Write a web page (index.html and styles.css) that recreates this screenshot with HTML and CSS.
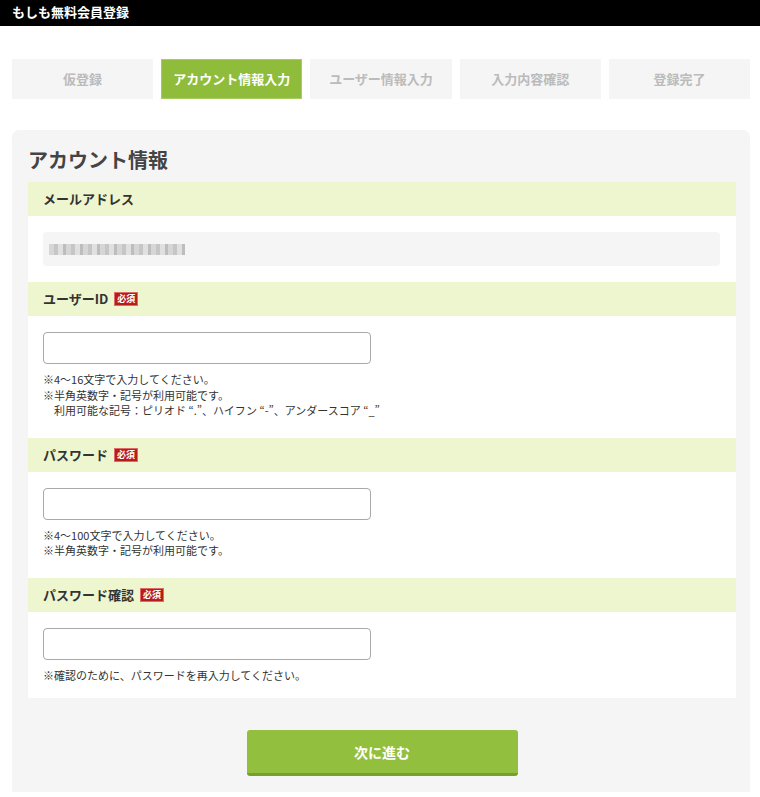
FILE: index.html
```html
<!DOCTYPE html>
<html lang="ja">
<head>
  <meta charset="UTF-8" />
  <meta name="viewport" content="width=device-width, initial-scale=1.0" />
  <title>もしも無料会員登録</title>
  <link rel="stylesheet" href="styles.css">
</head>
<body>
  <header class="site-header">もしも無料会員登録</header>

  <ol class="steps">
    <li class="step">仮登録</li>
    <li class="step active">アカウント情報入力</li>
    <li class="step">ユーザー情報入力</li>
    <li class="step">入力内容確認</li>
    <li class="step">登録完了</li>
  </ol>

  <main class="panel">
    <h1 class="panel-title">アカウント情報</h1>
    <div class="form-box">
      <div class="field-label">メールアドレス</div>
      <div class="field-body plain">
        <div class="readonly"><span class="blur"></span></div>
      </div>

      <div class="field-label">ユーザーID <span class="req">必須</span></div>
      <div class="field-body">
        <input class="text-input" type="text" />
        <p class="note">※4～16文字で入力してください。<br>※半角英数字・記号が利用可能です。<br>　利用可能な記号：ピリオド “.”、ハイフン “-”、アンダースコア “_”</p>
      </div>

      <div class="field-label">パスワード <span class="req">必須</span></div>
      <div class="field-body">
        <input class="text-input" type="password" />
        <p class="note">※4～100文字で入力してください。<br>※半角英数字・記号が利用可能です。</p>
      </div>

      <div class="field-label">パスワード確認 <span class="req">必須</span></div>
      <div class="field-body last">
        <input class="text-input" type="password" />
        <p class="note">※確認のために、パスワードを再入力してください。</p>
      </div>
    </div>

    <div class="actions">
      <button class="next-btn" type="button">次に進む</button>
    </div>
  </main>
</body>
</html>
```

FILE: styles.css
```css
:root {
  --green: #8fbc3b;
  --green-dark: #76a02c;
  --label-bg: #eef6d0;
  --panel: #f5f5f5;
  --text: #333;
  --muted: #bbb;
  --red: #b71c1c;
}

body {
  margin: 0;
  background-color: #fff;
  color: var(--text);
  font-family: 'Noto Sans CJK JP', 'Noto Sans', sans-serif;
}

.site-header {
  height: 26px;
  line-height: 24px;
  padding-left: 12px;
  background-color: #000;
  color: #fff;
  font-size: 13px;
  font-weight: 700;
}

.steps {
  list-style: none;
  margin: 33px 10px 0 12px;
  padding: 0;
  display: flex;
  gap: 8px;
}

.step {
  flex: 1;
  height: 40px;
  line-height: 40px;
  text-align: center;
  background-color: var(--panel);
  color: var(--muted);
  font-size: 13px;
  font-weight: 700;
}

.step.active {
  background-color: var(--green);
  color: #fff;
  box-shadow: inset 0 0 0 1px #a6cc63;
}

.panel {
  margin: 31px 10px 0 12px;
  padding: 16px 14px 16px 16px;
  background-color: var(--panel);
  border-radius: 7px 7px 0 0;
  box-shadow: 0 6px 8px -6px rgba(0, 0, 0, 0.08);
}

.panel-title {
  margin: 0 0 8px;
  font-size: 20px;
  line-height: 28px;
  font-weight: 700;
  color: #444;
}

.form-box {
  background-color: #fff;
}

.field-label {
  height: 34px;
  line-height: 34px;
  padding-left: 15px;
  background-color: var(--label-bg);
  font-size: 13px;
  font-weight: 700;
  color: #333;
  display: flex;
  align-items: center;
  gap: 7px;
}

.req {
  display: inline-block;
  height: 12px;
  line-height: 12px;
  padding: 0 2px;
  background-color: var(--red);
  color: #fff;
  font-size: 9px;
  font-weight: 700;
  box-shadow: 0 0 0 1px #e06a6a;
}

.field-body {
  padding: 16px 16px 19px 15px;
}

.field-body.plain {
  padding-bottom: 16px;
}

.field-body.last {
  padding-bottom: 15px;
}

.readonly {
  height: 34px;
  background-color: var(--panel);
  border-radius: 4px;
  display: flex;
  align-items: center;
  padding-left: 6px;
}

.blur {
  display: block;
  width: 136px;
  height: 11px;
  background: repeating-linear-gradient(90deg, #d6d6d6 0 5px, #c6c6c6 5px 9px, #e0e0e0 9px 14px, #bdbdbd 14px 17px);
  filter: blur(0.6px);
}

.text-input {
  display: block;
  box-sizing: border-box;
  width: 328px;
  height: 32px;
  margin: 0;
  border: 1px solid #a9a9a9;
  border-radius: 4px;
  background-color: #fff;
  font-size: 13px;
}

.note {
  margin: 8px 0 0;
  font-size: 11px;
  line-height: 15.5px;
  color: #333;
}

.actions {
  display: flex;
  justify-content: center;
  padding: 32px 0 0;
}

.next-btn {
  width: 271px;
  height: 46px;
  border: 0;
  border-bottom: 3px solid var(--green-dark);
  border-radius: 3px;
  background-color: #93bf3e;
  color: #fff;
  font-family: inherit;
  font-size: 14px;
  font-weight: 700;
  cursor: pointer;
}
```
